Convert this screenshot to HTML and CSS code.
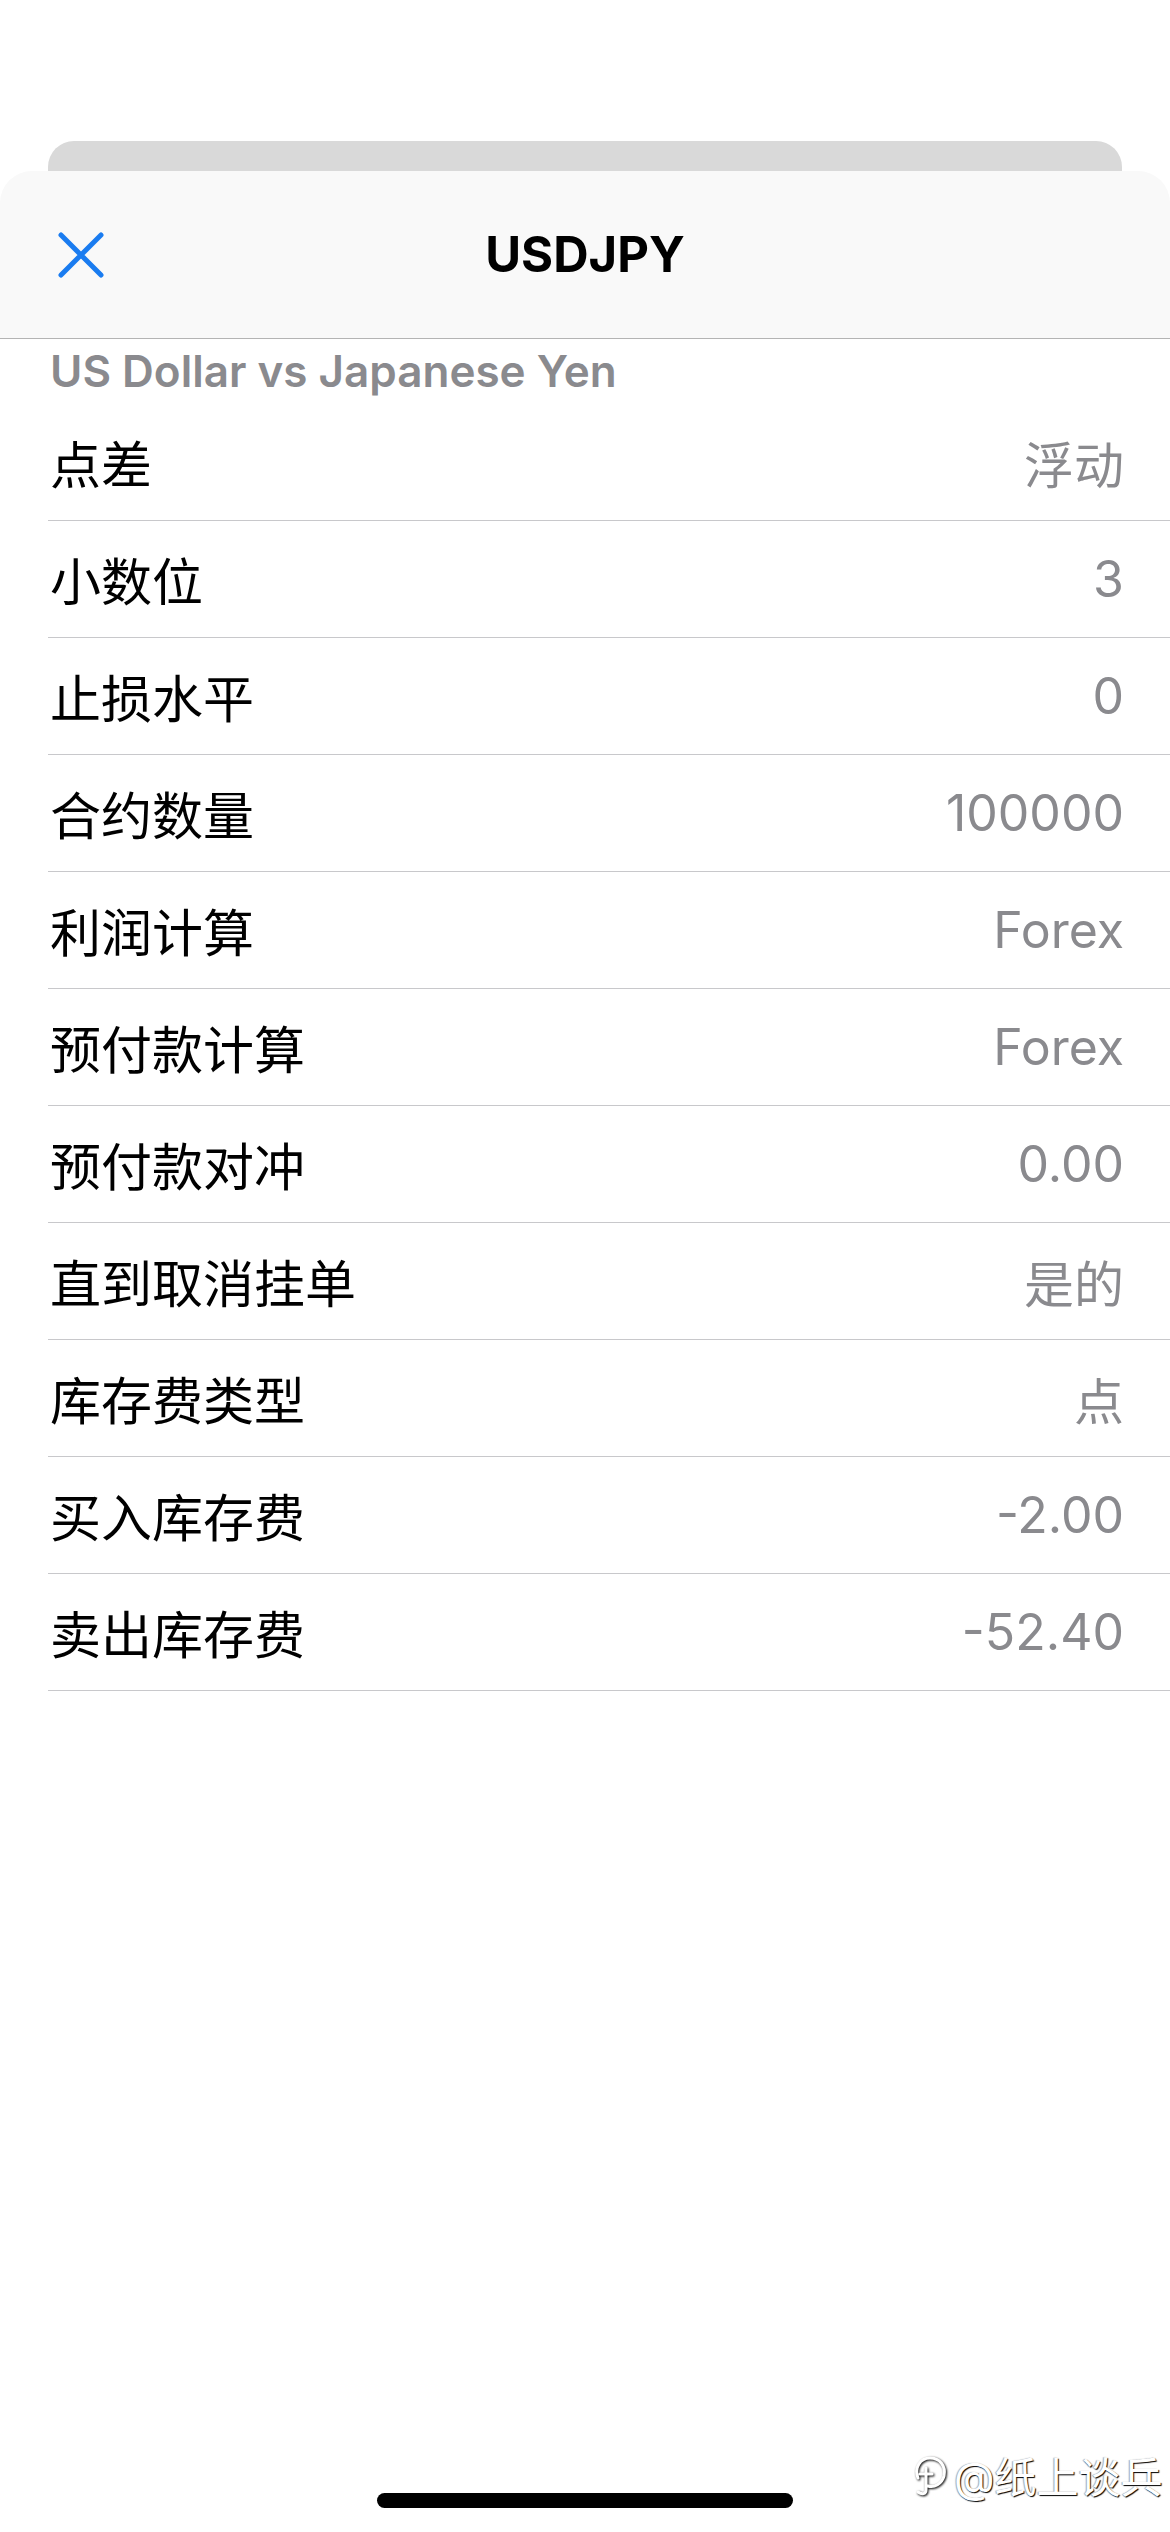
FILE: index.html
```html
<!DOCTYPE html>
<html>
<head lang="zh-CN">
    <meta charset="UTF-8">
    <title>USDJPY</title>
    <link rel="stylesheet" href="styles.css">
</head>
<body>
<div class="page">
    <div class="backcard"></div>
    <div class="sheet">
        <div class="sheet-head">
            <div class="close">
                <svg width="48" height="48" viewBox="0 0 48 48">
                    <path d="M4 4 L44 44 M44 4 L4 44" stroke="#1a7cf0" stroke-width="5" stroke-linecap="round" fill="none"/>
                </svg>
            </div>
            <div class="title">USDJPY</div>
            <div></div>
        </div>
        <div class="subtitle">US Dollar vs Japanese Yen</div>
        <ul class="list">
            <li><span class="label">点差</span><span class="value">浮动</span></li>
            <li><span class="label">小数位</span><span class="value">3</span></li>
            <li><span class="label">止损水平</span><span class="value">0</span></li>
            <li><span class="label">合约数量</span><span class="value">100000</span></li>
            <li><span class="label">利润计算</span><span class="value">Forex</span></li>
            <li><span class="label">预付款计算</span><span class="value">Forex</span></li>
            <li><span class="label">预付款对冲</span><span class="value">0.00</span></li>
            <li><span class="label">直到取消挂单</span><span class="value">是的</span></li>
            <li><span class="label">库存费类型</span><span class="value">点</span></li>
            <li><span class="label">买入库存费</span><span class="value">-2.00</span></li>
            <li><span class="label">卖出库存费</span><span class="value">-52.40</span></li>
        </ul>
    </div>

    <!-- 水印 -->
    <div class="mark">
        <svg width="36" height="42" viewBox="0 0 36 42">
            <path d="M6 24 C2 14 8 4 18 4 C28 4 34 12 32 22 C30 30 22 34 16 32 M14 14 L14 36 C14 40 10 41 6 38 M8 20 L20 20" stroke="#fff" stroke-width="3" fill="none" stroke-linecap="round"/>
        </svg>
        <span>@纸上谈兵</span>
    </div>
    <div class="home-bar"></div>
</div>
</body>
</html>
```

FILE: styles.css
```css
*{padding: 0;margin: 0;list-style: none;box-sizing: border-box;}
body{background: #fff;font-family: Inter, "Noto Sans CJK SC", sans-serif;}
.page{width: 1170px;height: 2532px;position: relative;overflow: hidden;background: #fff;}

.backcard{height: 30px;margin: 141px 48px 0;background: #d9d9d9;border-radius: 26px 26px 0 0;}

.sheet{background: #fff;border-radius: 32px 32px 0 0;overflow: hidden;}
.sheet-head{height: 168px;display: grid;grid-template-columns: 1fr auto 1fr;align-items: center;background: #f9f9f9;border-bottom: 1px solid #b4b4b4;padding: 0 57px;}
.close{display: flex;align-items: center;}
.title{font-size: 49px;font-weight: 700;color: #000;}

.subtitle{padding-left: 50px;height: 65px;line-height: 64px;font-size: 44px;font-weight: 600;color: #8a8a8e;}

.list{margin-left: 48px;}
.list li{height: 117px;display: flex;justify-content: space-between;align-items: center;padding: 0 46px 0 2px;border-bottom: 1px solid #c8c8cb;font-size: 51px;}
.label{color: #000;}
.value{color: #8a8a8e;font-size: 50px;}

.mark{position: absolute;left: 912px;top: 2444px;display: flex;align-items: center;gap: 6px;font-size: 42px;color: #fff;text-shadow: 1px 1px 1px #000, -1px 0 1px rgba(0,0,0,.35);}
.mark svg{filter: drop-shadow(1px 1px 1px #000);}
.home-bar{position: absolute;left: 377px;top: 2493px;width: 416px;height: 15px;border-radius: 8px;background: #000;}
```
